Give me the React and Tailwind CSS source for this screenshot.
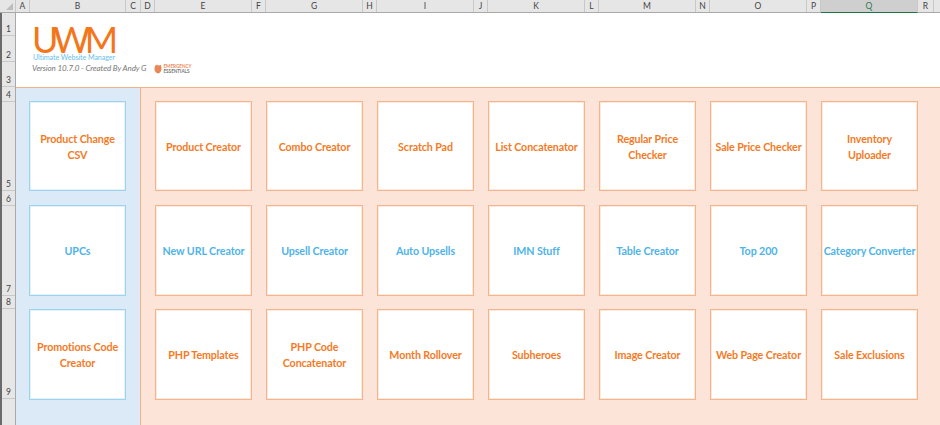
import React from 'react';

const columns = [
  ['A', 14], ['B', 96], ['C', 15], ['D', 14], ['E', 97], ['F', 14], ['G', 97], ['H', 14], ['I', 97],
  ['J', 14], ['K', 97], ['L', 14], ['M', 97], ['N', 14], ['O', 97], ['P', 14], ['Q', 97], ['R', 16],
];

const rowHeaders = [
  ['1', 23], ['2', 26], ['3', 25], ['4', 15], ['5', 89], ['6', 15], ['7', 90], ['8', 13], ['9', 90],
];

const sideItems = [
  { label: 'Product Change CSV', color: 'orange' },
  { label: 'UPCs', color: 'blue' },
  { label: 'Promotions Code Creator', color: 'orange' },
];

const mainRows = [
  { color: 'orange', items: ['Product Creator', 'Combo Creator', 'Scratch Pad', 'List Concatenator', 'Regular Price Checker', 'Sale Price Checker', 'Inventory\nUploader'] },
  { color: 'blue', items: ['New URL Creator', 'Upsell Creator', 'Auto Upsells', 'IMN Stuff', 'Table Creator', 'Top 200', 'Category Converter'] },
  { color: 'orange', items: ['PHP Templates', 'PHP Code Concatenator', 'Month Rollover', 'Subheroes', 'Image Creator', 'Web Page Creator', 'Sale Exclusions'] },
];

const rowSpacing = ['h-[90px]', 'h-[91px] mt-[14px]', 'h-[91px] mt-[13px]'];

const Card = ({ label, color, border, className = '' }) => (
  <div
    className={`flex items-center justify-center w-[97px] px-px pt-px bg-white border text-center text-[10.7px] tracking-[-0.1px] leading-[16px] font-bold whitespace-pre-line ${border} ${
      color === 'blue' ? 'text-[#4fb3e8]' : 'text-[#f57a1f]'
    } ${className}`}
  >
    <span>{label}</span>
  </div>
);

const App = () => {
  return (
    <div className="flex flex-col w-[940px] h-[425px] overflow-hidden bg-white font-['Lato',sans-serif]">
      {/* column letters */}
      <div className="flex h-[13px] shrink-0 bg-[#e6e6e6] border-b border-[#a9a9a9] text-[8.5px] leading-[12px] text-[#444]">
        <div className="relative w-[16px] shrink-0 border-r border-[#c8c8c8]">
          <div className="absolute right-[2px] bottom-[2px] w-0 h-0 border-l-[7px] border-b-[7px] border-l-transparent border-b-[#bdbdbd]" />
        </div>
        {columns.map(([name, width]) => (
          <div
            key={name}
            style={{ width }}
            className={`shrink-0 text-center border-r border-[#c8c8c8] ${
              name === 'Q' ? 'bg-[#cfcfcf] text-[#2f7a52] border-b border-b-[#217346] h-[13px]' : ''
            }`}
          >
            {name}
          </div>
        ))}
      </div>

      <div className="flex flex-1 min-h-0">
        {/* row numbers */}
        <div className="flex flex-col w-[16px] shrink-0 bg-[#e6e6e6] border-l-2 border-l-[#6a6a6a] border-r border-r-[#a9a9a9] text-[8.5px] leading-[9px] text-[#444]">
          {rowHeaders.map(([name, height]) => (
            <div
              key={name}
              style={{ height }}
              className="flex items-end justify-center shrink-0 pb-px border-b border-[#c8c8c8]"
            >
              {name}
            </div>
          ))}
        </div>

        <div className="flex flex-col flex-1 min-w-0">
          {/* logo band */}
          <div className="h-[75px] shrink-0 pl-[16px] pt-[12px] border-b border-[#f4b183]">
            <div className="h-[28px] text-[36px] leading-[28px] tracking-[-5.5px] text-[#f5761a]">UWM</div>
            <div className="h-[10px] ml-[1px] text-[7.2px] leading-[10px] tracking-[-0.1px] text-[#6cc0ee]">Ultimate Website Manager</div>
            <div className="flex items-center h-[11px]">
              <span className="text-[8px] leading-[11px] tracking-[-0.1px] italic text-[#777]">Version 10.7.0 - Created By Andy G</span>
              <div className="flex items-center ml-[8px] gap-[1px]">
                <svg width="8" height="10" viewBox="0 0 8 10">
                  <path d="M1 2 L3 .6 L4 1.6 L7 1 L7.6 5 Q7 8.6 4 9.6 Q1 8.6 .4 5 Z" fill="#e8875a" />
                </svg>
                <div className="text-[4.6px] leading-[5px] font-bold">
                  <div className="text-[#ee8a5a]">EMERGENCY</div>
                  <div className="text-[#777]">ESSENTIALS</div>
                </div>
              </div>
            </div>
          </div>

          <div className="flex flex-1 min-h-0">
            {/* side panel */}
            <div className="w-[124px] shrink-0 pl-[13px] pt-[13px] bg-[#dce9f7]">
              {sideItems.map((item, i) => (
                <Card
                  key={item.label}
                  label={item.label}
                  color={item.color}
                  border="border-[#9dd3f0] shadow-[inset_0_0_0_1px_rgba(157,211,240,0.3)]"
                  className={rowSpacing[i]}
                />
              ))}
            </div>

            {/* main panel */}
            <div className="flex-1 pl-[14px] pt-[13px] bg-[#fde4d8] border-l border-[#f4b183]">
              {mainRows.map((row, i) => (
                <div key={row.color + i} className={`flex gap-[14px] ${rowSpacing[i]}`}>
                  {row.items.map((label) => (
                    <Card
                      key={label}
                      label={label}
                      color={row.color}
                      border="border-[#f6b48a] shadow-[inset_0_0_0_1px_rgba(246,180,138,0.3)]"
                    />
                  ))}
                </div>
              ))}
            </div>
          </div>
        </div>
      </div>
    </div>
  );
};

export default App;
